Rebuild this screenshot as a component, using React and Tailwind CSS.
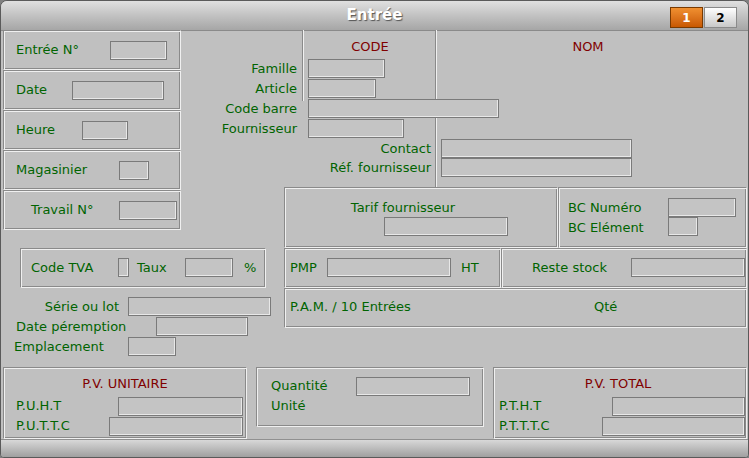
import React from "react";

const G = "text-[#006400]";
const R = "text-[#800000]";
const etch = "border border-t-[#8a8a8a] border-l-[#8a8a8a] border-b-[#f0f0f0] border-r-[#f0f0f0] shadow-[inset_1px_1px_0_#f0f0f0,inset_-1px_-1px_0_#8a8a8a]";

const Box = ({ x, y, w, h }) => (
  <div className={`absolute ${etch}`} style={{ left: x, top: y, width: w, height: h }} />
);

const fieldCls = "h-[19px] border border-[#7a7a7a] bg-[#c4c4c4] shadow-[inset_-1px_-1px_0_#e8e8e8]";

const Field = ({ x, y, w }) => (
  <div className={`absolute ${fieldCls}`} style={{ left: x, top: y, width: w }} />
);

const Label = ({ x, y, t, c = G, right, center }) => {
  const style = { top: y - 10 };
  if (right != null) style.right = 749 - right;
  else if (center != null) { style.left = center - 100; style.width = 200; }
  else style.left = x;
  return (
    <div className={`absolute leading-[20px] text-[13px] whitespace-nowrap ${c} ${center != null ? "text-center" : ""}`} style={style}>
      {t}
    </div>
  );
};

const leftRows = [
  { t: "Entrée N°", w: 57, pl: "pl-[12px]", gap: 94 - 0 },
  { t: "Date", w: 92 },
  { t: "Heure", w: 46 },
  { t: "Magasinier", w: 30 },
  { t: "Travail N°", w: 58 },
];
const leftX = [106, 68, 78, 115, 115];
const leftPad = [12, 12, 12, 12, 27];

export default function App() {
  return (
    <div className="w-[749px] h-[458px] bg-[#808080] font-[DejaVu_Sans,Verdana,sans-serif]">
      <div className="relative w-[749px] h-[458px] rounded-t-[7px] rounded-b-[4px] border border-[#5a5a5a] bg-[#c0c0c0] overflow-hidden">
        <div className="h-[30px] bg-gradient-to-b from-[#e0e0e0] via-[#c2c2c2] to-[#a6a6a6] flex items-center justify-center relative border-b border-[#8a8a8a]">
          <span className="text-white font-bold text-[15px] [text-shadow:1px_1px_1px_#555]">Entrée</span>
          <div className="absolute right-[11px] top-[6px] flex gap-[1px]">
            <div className="w-[33px] h-[21px] bg-gradient-to-b from-[#f09030] to-[#c85800] border border-[#7a3a00] text-white text-[12px] font-bold flex items-center justify-center">1</div>
            <div className="w-[33px] h-[21px] bg-gradient-to-b from-[#ffffff] to-[#c8c8c8] border border-[#8a8a8a] text-black text-[12px] font-bold flex items-center justify-center">2</div>
          </div>
        </div>

        {/* left column */}
        <div className="absolute left-[2px] top-[29px] w-[178px] flex flex-col">
          {leftRows.map((r, i) => (
            <div key={i} className={`h-[40px] flex items-center ${etch}`} style={{ paddingLeft: leftPad[i] }}>
              <span className={`text-[13px] ${G}`} style={{ width: leftX[i] - leftPad[i] }}>{r.t}</span>
              <div className={fieldCls} style={{ width: r.w }} />
            </div>
          ))}
        </div>

        {/* code / nom */}
        <div className="absolute left-[301px] top-[29px] w-[2px] h-[71px] border-l border-[#8a8a8a] border-r-[#f0f0f0] border-r" />
        <div className="absolute left-[434px] top-[29px] w-[2px] h-[157px] border-l border-[#8a8a8a] border-r-[#f0f0f0] border-r" />
        <Label center={369} y={46} t="CODE" c={R} />
        <Label center={587} y={46} t="NOM" c={R} />
        <Label right={298} y={68} t="Famille" /><Field x={307} y={58} w={77} />
        <Label right={298} y={88} t="Article" /><Field x={307} y={78} w={68} />
        <Label right={298} y={108} t="Code barre" /><Field x={307} y={98} w={191} />
        <Label right={298} y={128} t="Fournisseur" /><Field x={307} y={118} w={96} />
        <Label right={432} y={148} t="Contact" /><Field x={440} y={138} w={191} />
        <Label right={432} y={167} t="Réf. fournisseur" /><Field x={440} y={157} w={191} />

        <Box x={283} y={186} w={274} h={61} />
        <Box x={557} y={186} w={189} h={61} />
        <Label center={402} y={207} t="Tarif fournisseur" /><Field x={383} y={216} w={124} />
        <Label x={567} y={207} t="BC Numéro" /><Field x={667} y={197} w={68} />
        <Label x={567} y={227} t="BC Elément" /><Field x={667} y={216} w={30} />

        <Box x={19} y={247} w={246} h={40} />
        <Label x={30} y={267} t="Code TVA" /><Field x={117} y={257} w={11} />
        <Label x={136} y={267} t="Taux" /><Field x={184} y={257} w={48} />
        <Label x={243} y={267} t="%" />

        <Box x={283} y={247} w={217} h={40} />
        <Box x={500} y={247} w={246} h={40} />
        <Box x={283} y={287} w={463} h={40} />
        <Label x={289} y={267} t="PMP" /><Field x={326} y={257} w={124} />
        <Label x={460} y={267} t="HT" />
        <Label x={531} y={267} t="Reste stock" /><Field x={630} y={257} w={114} />
        <Label x={289} y={306} t="P.A.M. / 10 Entrées" />
        <Label x={593} y={306} t="Qté" />

        <Label right={120} y={306} t="Série ou lot" /><Field x={127} y={296} w={143} />
        <Label x={15} y={326} t="Date péremption" /><Field x={155} y={316} w={92} />
        <Label x={13} y={346} t="Emplacement" /><Field x={127} y={336} w={48} />

        <Box x={2} y={366} w={244} h={72} />
        <Box x={255} y={366} w={228} h={60} />
        <Box x={492} y={366} w={254} h={72} />
        <Label center={124} y={383} t="P.V. UNITAIRE" c={R} />
        <Label x={15} y={405} t="P.U.H.T" /><Field x={117} y={396} w={125} />
        <Label x={15} y={425} t="P.U.T.T.C" /><Field x={108} y={416} w={134} />
        <Label x={270} y={385} t="Quantité" /><Field x={355} y={376} w={114} />
        <Label x={270} y={405} t="Unité" />
        <Label center={617} y={383} t="P.V. TOTAL" c={R} />
        <Label x={498} y={405} t="P.T.H.T" /><Field x={611} y={396} w={133} />
        <Label x={498} y={425} t="P.T.T.T.C" /><Field x={601} y={416} w={143} />

        <div className="absolute left-0 right-0 bottom-0 h-[18px] bg-gradient-to-b from-[#d8d8d8] to-[#a0a0a0] border-t border-[#909090]" />
      </div>
    </div>
  );
}
